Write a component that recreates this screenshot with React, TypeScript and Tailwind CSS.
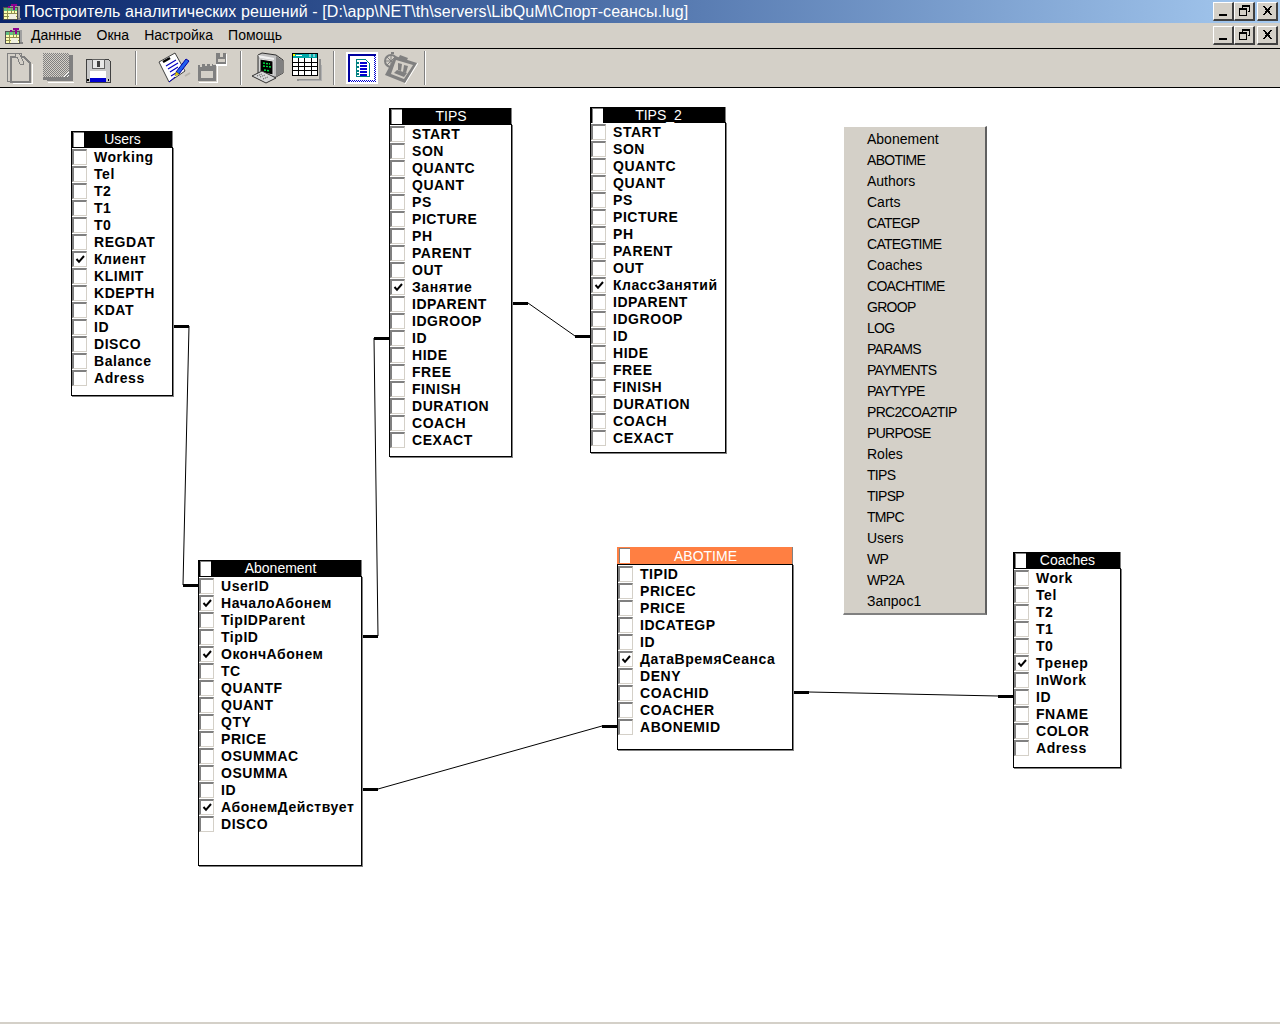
import React from 'react';

type TableDef = {
  name: string;
  x: number;
  y: number;
  w: number;
  titleH: number;
  h: number;
  rows: string[];
  checked: string[];
  orange?: boolean;
};

const TABLES: TableDef[] = [
  {
    name: 'Users', x: 71, y: 131, w: 102, titleH: 16, h: 249,
    rows: ['Working', 'Tel', 'T2', 'T1', 'T0', 'REGDAT', 'Клиент', 'KLIMIT', 'KDEPTH', 'KDAT', 'ID', 'DISCO', 'Balance', 'Adress'],
    checked: ['Клиент'],
  },
  {
    name: 'TIPS', x: 389, y: 108, w: 123, titleH: 16, h: 333,
    rows: ['START', 'SON', 'QUANTC', 'QUANT', 'PS', 'PICTURE', 'PH', 'PARENT', 'OUT', 'Занятие', 'IDPARENT', 'IDGROOP', 'ID', 'HIDE', 'FREE', 'FINISH', 'DURATION', 'COACH', 'CEXACT'],
    checked: ['Занятие'],
  },
  {
    name: 'TIPS_2', x: 590, y: 107, w: 136, titleH: 15, h: 331,
    rows: ['START', 'SON', 'QUANTC', 'QUANT', 'PS', 'PICTURE', 'PH', 'PARENT', 'OUT', 'КлассЗанятий', 'IDPARENT', 'IDGROOP', 'ID', 'HIDE', 'FREE', 'FINISH', 'DURATION', 'COACH', 'CEXACT'],
    checked: ['КлассЗанятий'],
  },
  {
    name: 'Abonement', x: 198, y: 560, w: 164, titleH: 16, h: 290,
    rows: ['UserID', 'НачалоАбонем', 'TipIDParent', 'TipID', 'ОкончАбонем', 'TC', 'QUANTF', 'QUANT', 'QTY', 'PRICE', 'OSUMMAC', 'OSUMMA', 'ID', 'АбонемДействует', 'DISCO'],
    checked: ['НачалоАбонем', 'ОкончАбонем', 'АбонемДействует'],
  },
  {
    name: 'ABOTIME', x: 617, y: 547, w: 176, titleH: 17, h: 186,
    rows: ['TIPID', 'PRICEC', 'PRICE', 'IDCATEGP', 'ID', 'ДатаВремяСеанса', 'DENY', 'COACHID', 'COACHER', 'ABONEMID'],
    checked: ['ДатаВремяСеанса'],
    orange: true,
  },
  {
    name: 'Coaches', x: 1013, y: 552, w: 108, titleH: 16, h: 200,
    rows: ['Work', 'Tel', 'T2', 'T1', 'T0', 'Тренер', 'InWork', 'ID', 'FNAME', 'COLOR', 'Adress'],
    checked: ['Тренер'],
  },
];

const TABLE_LIST = ['Abonement', 'ABOTIME', 'Authors', 'Carts', 'CATEGP', 'CATEGTIME', 'Coaches', 'COACHTIME', 'GROOP', 'LOG', 'PARAMS', 'PAYMENTS', 'PAYTYPE', 'PRC2COA2TIP', 'PURPOSE', 'Roles', 'TIPS', 'TIPSP', 'TMPC', 'Users', 'WP', 'WP2A', 'Запрос1'];

// [x1, y1, xMid1, yMid1, xMid2, yMid2, x2, y2]
const LINKS = [
  [174, 326, 189, 326, 183, 585, 198, 585],
  [363, 636, 378, 636, 374, 338, 389, 338],
  [513, 303, 528, 303, 575, 336, 590, 336],
  [363, 789, 378, 789, 602, 726, 617, 726],
  [794, 692, 809, 692, 998, 696, 1013, 696],
];

const CANVAS_TOP = 88;

function Checkbox({ on }: { on: boolean }) {
  return (
    <span className="relative block w-[15px] h-[16px] shrink-0 bg-white border-t-2 border-l-2 border-r border-b border-t-[#808080] border-l-[#808080] border-r-[#d4d0c8] border-b-[#d4d0c8]">
      {on && (
        <svg className="absolute left-[1px] top-[1px]" width="11" height="11" viewBox="0 0 11 11" fill="none">
          <path d="M1.500 5l2.500 2.800L9 2" stroke="#000" strokeWidth="2" />
        </svg>
      )}
    </span>
  );
}

function TableBox({ t }: { t: TableDef }) {
  return (
    <div className="absolute" style={{ left: t.x, top: t.y - CANVAS_TOP, width: t.w }}>
      <div
        className={`flex items-center relative border-r border-r-[#808080] ${t.orange ? 'bg-[#ff7f42]' : 'bg-black'}`}
        style={{ height: t.titleH }}
      >
        <span className="absolute left-[2px] top-[1px] w-[11px] h-[15px] bg-white border-l border-t border-[#808080]" />
        <span className="flex-1 text-center text-white text-[14px] leading-none pl-[2px]">{t.name}</span>
      </div>
      <div className="bg-white border border-black shadow-[1px_1px_0_#808080] overflow-hidden" style={{ height: t.h }}>
        {t.rows.map(r => (
          <div key={r} className="flex items-center h-[17px] gap-[7px]">
            <Checkbox on={t.checked.includes(r)} />
            <span className="text-[14px] leading-none font-bold tracking-[0.55px] text-black whitespace-nowrap">{r}</span>
          </div>
        ))}
      </div>
    </div>
  );
}

function Links() {
  return (
    <svg className="absolute left-0 top-0" width="1280" height="934" viewBox="0 88 1280 934" fill="none" stroke="#000">
      {LINKS.map((l, i) => (
        <g key={i}>
          <path d={`M${l[0]} ${l[1]}H${l[2]}`} strokeWidth="3" shapeRendering="crispEdges" />
          <path d={`M${l[2]} ${l[3]}L${l[4]} ${l[5]}`} strokeWidth="1" />
          <path d={`M${l[4]} ${l[5]}H${l[6]}`} strokeWidth="3" shapeRendering="crispEdges" />
        </g>
      ))}
    </svg>
  );
}

function WinButton({ kind }: { kind: 'min' | 'restore' | 'close' }) {
  return (
    <button className="flex items-center justify-center w-[21px] h-[19px] bg-[#d4d0c8] border-t border-l border-t-white border-l-white border-r-2 border-b-2 border-r-[#404040] border-b-[#404040]">
      <svg width="13" height="12" viewBox="0 0 13 12" shapeRendering="crispEdges">
        {kind === 'min' && <rect x="2" y="9" width="8" height="2" fill="#000" />}
        {kind === 'restore' && (
          <path d="M4 0h8v7h-2V6h1V2H5v1H4zM1 3h8v8H1zM2 5v5h6V5z" fill="#000" fillRule="evenodd" />
        )}
        {kind === 'close' && (
          <path d="M2 1h2l2 3h1l2-3h2L8 5.500 11 10H9L7 7H6l-2 3H2l3-4.500z" fill="#000" />
        )}
      </svg>
    </button>
  );
}

function AppIcon({ className }: { className: string }) {
  return (
    <svg className={className} width="18" height="18" viewBox="0 0 18 18" shapeRendering="crispEdges">
      <rect x="5" y="3" width="12" height="12" fill="#a0a0a0" />
      <rect x="0.500" y="4.500" width="14" height="12" fill="#ffffb0" stroke="#505050" />
      <rect x="1" y="5" width="13" height="3" fill="#60c080" />
      <path d="M1 10.500h13M1 13.500h13M4.500 5v11M8.500 5v11M11.500 5v11" stroke="#909050" strokeWidth="1" fill="none" />
      <path d="M5 3h3V1h6v2h-2v4h-2V3H7v2H5z" fill="#900090" />
      <rect x="6" y="11" width="7" height="5" fill="#f0f0e0" />
      <rect x="15" y="15" width="3" height="2" fill="#808080" />
    </svg>
  );
}

function PagesIcon() {
  return (
    <svg width="28" height="32" viewBox="0 0 28 32" fill="none" shapeRendering="crispEdges">
      <path d="M2 1h14v3M2 1v28h4" stroke="#808080" />
      <path d="M6 5h13l6 6v19H6z" fill="#d4d0c8" stroke="#808080" strokeWidth="2" />
      <path d="M8 31h19V12" stroke="#fff" />
      <path d="M10 1h4l4 8v3h-3l-3-7h-2z" fill="#d4d0c8" stroke="#808080" />
    </svg>
  );
}

function GrayStackIcon() {
  return (
    <svg width="32" height="32" viewBox="0 0 32 32" shapeRendering="crispEdges">
      <defs>
        <pattern id="dith" width="2" height="2" patternUnits="userSpaceOnUse">
          <rect width="2" height="2" fill="#d4d0c8" />
          <rect width="1" height="1" fill="#808080" />
          <rect x="1" y="1" width="1" height="1" fill="#808080" />
        </pattern>
      </defs>
      <rect x="5" y="3" width="26" height="26" fill="#808080" />
      <rect x="1" y="1" width="26" height="24" fill="url(#dith)" />
      <path d="M1 25h20l6-6v6l-2 3H1z" fill="#808080" />
      <path d="M22 25l5-5M25 25l2-2" stroke="#fff" />
      <path d="M6 30h26V8" stroke="#fff" fill="none" />
    </svg>
  );
}

function FloppyIcon() {
  return (
    <svg width="28" height="32" viewBox="0 0 28 32" shapeRendering="crispEdges">
      <path d="M2 7h22l2 2v21H2z" fill="#c8c8c8" stroke="#404040" />
      <rect x="8" y="7" width="12" height="9" fill="#e8e8e8" stroke="#606060" />
      <rect x="13" y="9" width="3" height="6" fill="#404040" />
      <rect x="6" y="19" width="16" height="8" fill="#fff" />
      <rect x="6" y="26" width="16" height="4" fill="#0000d0" />
      <rect x="3" y="27" width="2" height="2" fill="#000" />
      <rect x="24" y="27" width="1" height="2" fill="#000" />
    </svg>
  );
}

function PenDocIcon() {
  return (
    <svg width="34" height="32" viewBox="0 0 34 32">
      <path d="M1 10L17 1l10 18-16 11z" fill="#fff" stroke="#404040" />
      <path d="M5 10l7-4" stroke="#000" strokeWidth="2.500" />
      <path d="M8 14l10-6M10 17l10-6M12 20l8-5M13 24l5-3" stroke="#0000c0" strokeWidth="1.200" />
      <path d="M31 9l-10 13 -3-2L28 7z" fill="#2060f0" stroke="#0000a0" strokeWidth="1" />
      <path d="M18 20l3 2-4 2z" fill="#f0d000" stroke="#808000" strokeWidth="0.500" />
      <path d="M11 30l6-5" stroke="#0000c0" />
      <path d="M27 24l5-3" stroke="#b8b4ac" strokeWidth="2" />
    </svg>
  );
}

function GrayFloppyIcon() {
  return (
    <svg width="32" height="32" viewBox="0 0 32 32" shapeRendering="crispEdges">
      <path d="M1 13h18v16H1z" fill="#808080" />
      <path d="M4 12h12v5H4z" fill="#808080" />
      <path d="M3 11h2v4H3zM8 11h2v3H8zM13 11h2v3h-2z" fill="#d4d0c8" />
      <rect x="4" y="19" width="12" height="7" fill="#d4d0c8" />
      <path d="M2 30h18V14" stroke="#fff" fill="none" />
      <path d="M19 2h11v12H19z" fill="#fff" />
      <path d="M19 1h10v11H19z" fill="#808080" />
      <rect x="23" y="1" width="3" height="4" fill="#d4d0c8" />
      <rect x="21" y="7" width="7" height="3" fill="#d4d0c8" />
    </svg>
  );
}

function ComputerIcon() {
  return (
    <svg width="34" height="32" viewBox="0 0 34 32">
      <path d="M7 3l4-2 14 2 7 5v13l-7 4-5 1-13-4z" fill="#c0c0c0" stroke="#303030" />
      <path d="M25 4l7 5v12l-7 4z" fill="#808080" />
      <path d="M7 3l16 3v2L9 6z" fill="#f0f0f0" />
      <path d="M9 7l13 2v14L9 20z" fill="#000" stroke="#e8e8e8" />
      <path d="M12 11l7 1M12 14l8 1M13 18l6 1" stroke="#00e040" strokeWidth="1.500" strokeDasharray="2 1" />
      <path d="M1 24l10-5 14 7-10 5z" fill="#d8d8d8" stroke="#303030" />
      <path d="M6 24l5-2M9 25l5-2M12 27l5-2" stroke="#404040" strokeDasharray="1 1" />
    </svg>
  );
}

function TableIcon() {
  return (
    <svg width="32" height="32" viewBox="0 0 32 32" shapeRendering="crispEdges">
      <path d="M6 29h24V7h-2v20H6z" fill="#909090" />
      <path d="M8 29h23V13h-1v15H8z" fill="#b0b0b0" />
      <rect x="1.500" y="1.500" width="25" height="22" fill="#fff" stroke="#000" />
      <rect x="2" y="2" width="24" height="4" fill="#00a8a8" />
      <rect x="2" y="2" width="2" height="2" fill="#ffff00" />
      <rect x="5" y="3" width="6" height="1" fill="#fff" />
      <rect x="18" y="2" width="2" height="3" fill="#80d0d0" />
      <rect x="22" y="2" width="2" height="3" fill="#80d0d0" />
      <path d="M2 10h24M2 14h24M2 18h24M7 6v17M13 6v17M20 6v17" stroke="#000" fill="none" />
    </svg>
  );
}

function BlueDocIcon() {
  return (
    <svg width="32" height="32" viewBox="0 0 32 32" shapeRendering="crispEdges">
      <defs>
        <pattern id="bchk" width="2" height="2" patternUnits="userSpaceOnUse">
          <rect width="2" height="2" fill="#fff" />
          <rect width="1" height="1" fill="#0000d0" />
          <rect x="1" y="1" width="1" height="1" fill="#0000d0" />
        </pattern>
      </defs>
      <rect width="32" height="32" fill="#fff" />
      <rect x="2" y="2" width="28" height="28" fill="url(#bchk)" />
      <rect x="4" y="4" width="24" height="24" fill="#fff" />
      <rect x="2" y="2" width="28" height="2" fill="#0000a0" />
      <rect x="2" y="2" width="2" height="28" fill="#0000a0" />
      <path d="M10.500 7.500h9l4 4v13h-13z" fill="#fff" stroke="#008080" />
      <path d="M11 11h2M11 15h2M11 19h2M11 22h2" stroke="#008080" strokeWidth="2" />
      <path d="M14 11h7M14 14h7M14 17h7M14 20h7M14 23h7" stroke="#0000d0" strokeWidth="2" />
    </svg>
  );
}

function GrayClipIcon() {
  return (
    <svg width="34" height="32" viewBox="0 0 34 32">
      <circle cx="7" cy="9" r="6" fill="#d4d0c8" stroke="#808080" strokeWidth="2" />
      <path d="M1 9h12M7 3v12M3 5l8 8M11 5l-8 8" stroke="#808080" />
      <path d="M7 1h3" stroke="#808080" strokeWidth="2" />
      <path d="M11 4l22 7-12 20L1 23z" fill="#808080" />
      <path d="M12 8l17 5-9 14L7 22z" fill="#d4d0c8" />
      <path d="M14 11l4 1-1 7-3-1zM20 13l4 1-2 7-3-1z" fill="#808080" />
      <path d="M10 21l10 4 3-4-10-3z" fill="#808080" />
      <path d="M21 32l13-21" stroke="#fff" />
      <path d="M16 3l8 3-2 4-8-3z" fill="#808080" />
    </svg>
  );
}

function ToolSep({ className }: { className: string }) {
  return <span className={`block w-[2px] h-[34px] bg-[#808080] border-r border-r-white ${className}`} />;
}

function WinButtons() {
  return (
    <div className="ml-auto flex">
      <WinButton kind="min" />
      <WinButton kind="restore" />
      <span className="w-[2px]" />
      <WinButton kind="close" />
    </div>
  );
}

export default function App() {
  const title = 'Построитель аналитических решений - [D:\\app\\NET\\th\\servers\\LibQuM\\Спорт-сеансы.lug]';
  return (
    <div className="w-[1280px] h-[1024px] bg-white overflow-hidden font-['Liberation_Sans',Arial,sans-serif]">
      <div className="flex items-center h-[23px] pr-[2px] bg-gradient-to-r from-[#0a246a] to-[#a6caf0]">
        <AppIcon className="ml-[3px] shrink-0" />
        <span className="ml-[3px] text-white text-[16px] tracking-[0.08px] leading-none whitespace-nowrap">{title}</span>
        <WinButtons />
      </div>

      <div className="flex items-center h-[25px] pr-[2px] bg-[#d4d0c8] border-b border-b-black box-content text-[14px] text-black">
        <AppIcon className="ml-[5px] shrink-0" />
        <span className="ml-[8px]">Данные</span>
        <span className="ml-[15px]">Окна</span>
        <span className="ml-[15px]">Настройка</span>
        <span className="ml-[15px]">Помощь</span>
        <WinButtons />
      </div>

      <div className="flex items-center h-[38px] pl-[5px] bg-[#d4d0c8] border-b border-b-black box-content">
        <PagesIcon />
        <span className="ml-[9px]"><GrayStackIcon /></span>
        <span className="ml-[10px]"><FloppyIcon /></span>
        <ToolSep className="ml-[23px]" />
        <span className="ml-[21px]"><PenDocIcon /></span>
        <span className="ml-[5px]"><GrayFloppyIcon /></span>
        <ToolSep className="ml-[11px]" />
        <span className="ml-[9px]"><ComputerIcon /></span>
        <span className="ml-[6px]"><TableIcon /></span>
        <ToolSep className="ml-[10px]" />
        <span className="ml-[11px]"><BlueDocIcon /></span>
        <span className="ml-[6px]"><GrayClipIcon /></span>
        <ToolSep className="ml-[6px]" />
      </div>

      <div className="relative h-[936px] border-b-2 border-b-[#d4d0c8]">
        <Links />
        {TABLES.map(t => <TableBox key={t.name} t={t} />)}
        <div
          className="absolute w-[144px] h-[489px] bg-[#d4d0c8] border-t border-l border-t-white border-l-white border-r-2 border-b-2 border-r-[#606060] border-b-[#808080] text-[14px] text-black"
          style={{ left: 843, top: 126 - CANVAS_TOP }}
        >
          {TABLE_LIST.map(n => (
            <div
              key={n}
              className={`h-[21px] leading-[21px] pl-[23px] whitespace-nowrap first:mt-[2px] ${n === n.toUpperCase() ? 'tracking-[-0.7px]' : 'tracking-[0px]'}`}
            >
              {n}
            </div>
          ))}
        </div>
      </div>
    </div>
  );
}
